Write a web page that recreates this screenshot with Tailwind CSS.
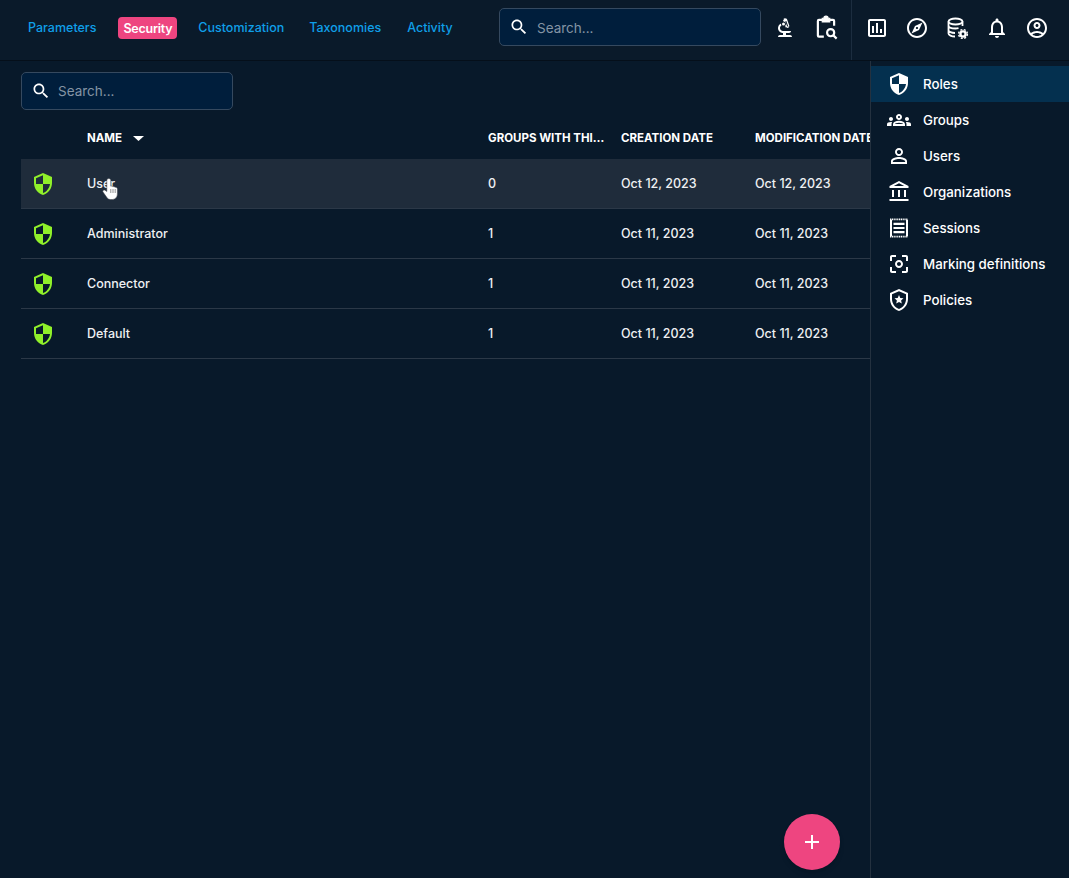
<!DOCTYPE html>
<html><head><meta charset="utf-8"><script src="https://cdn.jsdelivr.net/npm/@tailwindcss/browser@4"></script><title>Security</title></head>
<body class="bg-[#08192a] overflow-hidden">
<div class="relative w-[1069px] h-[878px] flex flex-col overflow-hidden font-['Inter','Roboto',sans-serif] text-white">
 <header class="h-[61px] shrink-0 bg-[#0a1a2a] border-b border-[#050f1a] flex items-center">
  <nav class="flex items-center w-[499px] pl-[21px] gap-[10px] text-[12.5px] font-medium text-[#0f9fe8] pb-[5px]">
   <span class="px-[7px] pt-[4px] pb-[2px] mr-[5px]">Parameters</span>
   <span class="px-[5px] pt-[4px] pb-[2px] h-[22px] leading-[16px] rounded-[4px] bg-[#ee4580] text-white font-semibold tracking-[-0.02em]">Security</span>
   <span class="px-[6px] pt-[4px] pb-[2px] ml-[5px] mr-[3px]">Customization</span>
   <span class="px-[6px] pt-[4px] pb-[2px] mr-[4px]">Taxonomies</span>
   <span class="px-[6px] pt-[4px] pb-[2px]">Activity</span>
  </nav>
  <div class="w-[262px] h-[38px] mb-[6px] bg-[#001e3c] border border-[#35495f] rounded-[5px] flex items-center pl-[9px] gap-[8px] text-[13.5px] text-[#8494a4]">
   <svg class="w-[20px] h-[20px] fill-white shrink-0" viewBox="0 0 24 24"><path d="M15.5 14h-.79l-.28-.27C15.41 12.59 16 11.11 16 9.5 16 5.91 13.09 3 9.5 3S3 5.91 3 9.5 5.91 16 9.5 16c1.61 0 3.09-.59 4.23-1.57l.27.28v.79l5 4.99L20.49 19l-4.99-5zm-6 0C7.01 14 5 11.99 5 9.5S7.01 5 9.5 5 14 7.01 14 9.5 11.99 14 9.5 14z"/></svg>
   <span class="pt-[2px]">Search...</span>
  </div>
  <div class="flex items-center gap-[16px] ml-[12px] pb-[5px]">
   <svg class="w-[24px] h-[24px] fill-white" viewBox="0 0 24 24"><path fill-rule="evenodd" d="M7 19c-1.1 0-2 .9-2 2h14c0-1.1-.9-2-2-2h-4v-2h3c1.1 0 2-.9 2-2h-8c-1.66 0-3-1.34-3-3 0-1.09.59-2.04 1.46-2.56C8.17 9.03 8 8.54 8 8c0-.21.04-.42.09-.62C6.28 8.13 5 9.92 5 12c0 2.76 2.24 5 5 5v2H7zM10.56 5.51C11.91 5.54 13 6.64 13 8c0 .75-.33 1.41-.85 1.87l.59 1.62.94-.34.34.94 1.88-.68-.34-.94.94-.34-2.74-7.52-.94.34-.34-.94-1.88.68.34.94-.94.35.56 1.53zM13.3 4.9l1.9 5.3-1 .4-1.9-5.3z"/><circle cx="10.5" cy="8" r="1.5"/></svg>
   <svg class="w-[26px] h-[26px] fill-none stroke-white stroke-[2]" viewBox="0 0 24 24"><path d="M10 20H5.5a1 1 0 0 1-1-1V5.5a1 1 0 0 1 1-1H9M15 4.500h3.500a1 1 0 0 1 1 1V10"/><path d="M8.500 3h1.500a2 2 0 0 1 4 0h1.500v3.500H8.500z" class="fill-white stroke-[1]"/><circle cx="16.300" cy="16.300" r="3.300"/><path d="M18.800 18.800l3 3"/></svg>
  </div>
  <div class="flex items-center gap-[16px] h-full ml-[12px] pl-[13px] border-l border-[#1c2d3f] pb-[5px]">
   <svg class="w-[24px] h-[24px] fill-white" viewBox="0 0 24 24"><path d="M9 17H7v-7h2v7zm4 0h-2V7h2v10zm4 0h-2v-4h2v4zm2 2H5V5h14v14.100V19zm0-16H5c-1.100 0-2 .9-2 2v14c0 1.100.9 2 2 2h14c1.100 0 2-.9 2-2V5c0-1.100-.9-2-2-2z"/></svg>
   <svg class="w-[24px] h-[24px] fill-white" viewBox="0 0 24 24"><path d="M12 2C6.48 2 2 6.48 2 12s4.48 10 10 10 10-4.48 10-10S17.52 2 12 2zm0 18c-4.41 0-8-3.59-8-8s3.59-8 8-8 8 3.59 8 8-3.59 8-8 8zm-5.500-2.500l7.510-3.490L17.500 6.500 9.990 9.990 6.500 17.500zm5.500-6.600c.61 0 1.100.49 1.100 1.100s-.49 1.100-1.100 1.100-1.100-.49-1.100-1.100.49-1.100 1.100-1.100z"/></svg>
   <svg class="w-[24px] h-[24px] fill-none stroke-white stroke-[1.800]" viewBox="0 0 24 24"><ellipse cx="10.500" cy="5.500" rx="7" ry="3"/><path d="M3.500 5.500v12c0 1.500 3 3 6.500 3M17.500 5.500v4.500M3.500 9.500c0 1.700 3 3 7 3 1 0 2-.1 3-.3M3.500 14c0 1.600 3 3 6.500 3"/><circle cx="18" cy="18" r="2.600" class="stroke-[2.400]"/><circle cx="18" cy="18" r="4.400" class="stroke-[1.400] [stroke-dasharray:2_1.500]"/></svg>
   <svg class="w-[24px] h-[24px] fill-white" viewBox="0 0 24 24"><path d="M12 22c1.100 0 2-.9 2-2h-4c0 1.100.9 2 2 2zm6-6v-5c0-3.070-1.630-5.640-4.500-6.320V4c0-.83-.67-1.500-1.500-1.500s-1.500.67-1.500 1.500v.68C7.640 5.360 6 7.920 6 11v5l-2 2v1h16v-1l-2-2zm-2 1H8v-6c0-2.480 1.510-4.500 4-4.500s4 2.020 4 4.500v6z"/></svg>
   <svg class="w-[24px] h-[24px] fill-white" viewBox="0 0 24 24"><path d="M12 2C6.480 2 2 6.480 2 12s4.480 10 10 10 10-4.480 10-10S17.520 2 12 2zM7.350 18.500C8.660 17.560 10.260 17 12 17s3.340.56 4.650 1.500c-1.310.94-2.910 1.500-4.650 1.500s-3.340-.56-4.650-1.500zm10.790-1.380C16.450 15.800 14.320 15 12 15s-4.450.8-6.140 2.120C4.700 15.730 4 13.950 4 12c0-4.420 3.580-8 8-8s8 3.580 8 8c0 1.950-.7 3.730-1.860 5.120zM12 6c-1.930 0-3.500 1.570-3.500 3.500S10.070 13 12 13s3.500-1.570 3.500-3.500S13.930 6 12 6zm0 5c-.83 0-1.500-.67-1.500-1.500S11.170 8 12 8s1.500.67 1.500 1.500S12.830 11 12 11z"/></svg>
  </div>
 </header>
 <div class="flex flex-1 min-h-0">
  <main class="w-[870px] shrink-0 pl-[21px] pt-[11px] overflow-hidden">
   <div class="w-[212px] h-[38px] bg-[#001e3c] border border-[#35495f] rounded-[5px] flex items-center pl-[9px] gap-[7px] text-[13.500px] text-[#8494a4]">
    <svg class="w-[20px] h-[20px] fill-white shrink-0" viewBox="0 0 24 24"><path d="M15.500 14h-.79l-.28-.27C15.410 12.590 16 11.110 16 9.500 16 5.910 13.090 3 9.500 3S3 5.910 3 9.500 5.910 16 9.500 16c1.610 0 3.090-.59 4.230-1.570l.27.28v.79l5 4.990L20.490 19l-4.990-5zm-6 0C7.010 14 5 11.990 5 9.500S7.010 5 9.500 5 14 7.010 14 9.500 11.990 14 9.500 14z"/></svg>
    <span>Search...</span>
   </div>
   <div class="relative">
    <div class="grid grid-cols-[66px_401px_133px_134px_1fr] items-center h-[49px] pt-[8px] text-[11.500px] font-bold whitespace-nowrap">
     <span></span>
     <span class="flex items-center gap-[11px]">NAME<svg class="w-[11px] h-[5px] fill-white" viewBox="0 0 11 5"><path d="M0 0h11L5.500 5z"/></svg></span>
     <span class="w-[119px] truncate">GROUPS WITH THIS ROLE</span>
     <span>CREATION DATE</span>
     <span class="overflow-hidden">MODIFICATION DATE</span>
    </div>
    <div class="grid grid-cols-[66px_401px_133px_134px_1fr] items-center h-[50px] bg-[#1f2c3b] border-b border-[#2b3847] text-[12.500px] font-medium text-[#eef0f2] [&>span]:pt-[2px]">
     <svg class="w-[24px] h-[24px] ml-[10px] fill-[#90f02a]" viewBox="0 0 24 24"><path d="M12 1 3 5v6c0 5.550 3.840 10.740 9 12 5.160-1.260 9-6.450 9-12V5l-9-4zm0 10.990h7c-.53 4.120-3.280 7.790-7 8.940V12H5V6.300l7-3.110v8.800z"/></svg>
     <span>User</span><span>0</span><span>Oct 12, 2023</span><span>Oct 12, 2023</span>
    </div>
    <div class="grid grid-cols-[66px_401px_133px_134px_1fr] items-center h-[50px] border-b border-[#2b3847] text-[12.500px] font-medium text-[#eef0f2] [&>span]:pt-[2px]">
     <svg class="w-[24px] h-[24px] ml-[10px] fill-[#90f02a]" viewBox="0 0 24 24"><path d="M12 1 3 5v6c0 5.550 3.840 10.740 9 12 5.160-1.260 9-6.450 9-12V5l-9-4zm0 10.990h7c-.53 4.120-3.280 7.790-7 8.940V12H5V6.300l7-3.110v8.800z"/></svg>
     <span>Administrator</span><span>1</span><span>Oct 11, 2023</span><span>Oct 11, 2023</span>
    </div>
    <div class="grid grid-cols-[66px_401px_133px_134px_1fr] items-center h-[50px] border-b border-[#2b3847] text-[12.500px] font-medium text-[#eef0f2] [&>span]:pt-[2px]">
     <svg class="w-[24px] h-[24px] ml-[10px] fill-[#90f02a]" viewBox="0 0 24 24"><path d="M12 1 3 5v6c0 5.550 3.840 10.740 9 12 5.160-1.260 9-6.450 9-12V5l-9-4zm0 10.990h7c-.53 4.120-3.280 7.790-7 8.940V12H5V6.300l7-3.110v8.800z"/></svg>
     <span>Connector</span><span>1</span><span>Oct 11, 2023</span><span>Oct 11, 2023</span>
    </div>
    <div class="grid grid-cols-[66px_401px_133px_134px_1fr] items-center h-[50px] border-b border-[#2b3847] text-[12.500px] font-medium text-[#eef0f2] [&>span]:pt-[2px]">
     <svg class="w-[24px] h-[24px] ml-[10px] fill-[#90f02a]" viewBox="0 0 24 24"><path d="M12 1 3 5v6c0 5.550 3.840 10.740 9 12 5.160-1.260 9-6.450 9-12V5l-9-4zm0 10.990h7c-.53 4.120-3.280 7.790-7 8.940V12H5V6.300l7-3.110v8.800z"/></svg>
     <span>Default</span><span>1</span><span>Oct 11, 2023</span><span>Oct 11, 2023</span>
    </div>
    <svg class="absolute left-[81px] top-[68px] w-[17px] h-[22px]" viewBox="0 0 17 22"><path d="M6.800.6C8 .6 8.800 1.500 8.800 2.600V8.200c.8-.3 1.700 0 2.100.6.7-.4 1.600-.2 2.100.5.9-.3 2.400.3 2.400 1.600V16c0 3-2 5.500-5 5.500H8.500c-1.700 0-2.800-.8-3.600-2L1 14c-.8-1.100.6-2.800 2-1.800l1.800 1.300V2.600C4.800 1.500 5.600.6 6.800.6z" fill="#fff" stroke="#3a3f47" stroke-width=".5"/><path d="M8.800 11v4M11 11v4M13.200 11v4" stroke="#666" stroke-width=".7"/></svg>
   </div>
  </main>
  <aside class="w-[199px] shrink-0 border-l border-[#24313f] pt-[5px] text-[13.300px] font-medium [&>div>span]:pt-[2px]">
   <div class="h-[36px] flex items-center gap-[12px] pl-[16px] bg-[#04304f]"><svg class="w-[24px] h-[24px] fill-white" viewBox="0 0 24 24"><path d="M12 1 3 5v6c0 5.550 3.840 10.740 9 12 5.160-1.260 9-6.450 9-12V5l-9-4zm0 10.990h7c-.53 4.120-3.280 7.790-7 8.940V12H5V6.300l7-3.110v8.800z"/></svg><span>Roles</span></div>
   <div class="h-[36px] flex items-center gap-[12px] pl-[16px]"><svg class="w-[24px] h-[24px] fill-white" viewBox="0 0 24 24"><path d="M4 13c1.100 0 2-.9 2-2s-.9-2-2-2-2 .9-2 2 .9 2 2 2zm1.130 1.100c-.37-.06-.74-.1-1.130-.1-.99 0-1.930.21-2.780.58C.48 14.900 0 15.620 0 16.430V18h4.500v-1.610c0-.83.23-1.610.63-2.290zM20 13c1.100 0 2-.9 2-2s-.9-2-2-2-2 .9-2 2 .9 2 2 2zm4 3.430c0-.81-.48-1.530-1.220-1.850-.85-.37-1.790-.58-2.780-.58-.39 0-.76.04-1.130.1.4.68.63 1.460.63 2.290V18H24v-1.570zm-7.760-2.780C15.070 13.140 13.630 12.750 12 12.750c-1.630 0-3.070.39-4.240.9C6.680 14.130 6 15.210 6 16.390V18h12v-1.610c0-1.180-.68-2.260-1.760-2.740zM8.070 16c.09-.23.13-.39.91-.69.97-.38 1.990-.56 3.020-.56s2.050.18 3.020.56c.77.3.81.46.91.69H8.070zM12 8c.55 0 1 .45 1 1s-.45 1-1 1-1-.45-1-1 .45-1 1-1m0-2c-1.660 0-3 1.340-3 3s1.340 3 3 3 3-1.340 3-3-1.340-3-3-3z"/></svg><span>Groups</span></div>
   <div class="h-[36px] flex items-center gap-[12px] pl-[16px]"><svg class="w-[24px] h-[24px] fill-white" viewBox="0 0 24 24"><path d="M12 5.900c1.160 0 2.100.94 2.100 2.100s-.94 2.100-2.100 2.100S9.900 9.160 9.900 8s.94-2.100 2.100-2.100m0 9c2.970 0 6.100 1.460 6.100 2.100v1.100H5.900V17c0-.64 3.130-2.100 6.100-2.100M12 4C9.790 4 8 5.790 8 8s1.790 4 4 4 4-1.790 4-4-1.790-4-4-4zm0 9c-2.670 0-8 1.340-8 4v3h16v-3c0-2.660-5.330-4-8-4z"/></svg><span>Users</span></div>
   <div class="h-[36px] flex items-center gap-[12px] pl-[16px]"><svg class="w-[24px] h-[24px] fill-white" viewBox="0 0 24 24"><path d="M6.500 10h-2v7h2v-7zm6 0h-2v7h2v-7zm8.500 9H2v2h19v-2zm-2.500-9h-2v7h2v-7zm-7-6.740L16.710 6H6.290l5.210-2.740m0-2.260L2 6v2h19V6l-9.500-5z" transform="translate(.5 0)"/></svg><span>Organizations</span></div>
   <div class="h-[36px] flex items-center gap-[12px] pl-[16px]"><svg class="w-[24px] h-[24px] fill-white" viewBox="0 0 24 24"><path fill-rule="evenodd" d="M3 3.800h2v16.400H3zM19 3.800h2v16.400h-2zM6.500 6.800h11v2.200h-11zM6.500 10.900h11v2.200h-11zM6.500 15h11v2.200h-11z"/><path d="M3 3.400h18M3 20.600h18" class="fill-none stroke-white stroke-[1.800] [stroke-dasharray:1.200_.6]"/></svg><span>Sessions</span></div>
   <div class="h-[36px] flex items-center gap-[12px] pl-[16px]"><svg class="w-[24px] h-[24px] fill-white" viewBox="0 0 24 24"><path d="M12 8c-2.210 0-4 1.790-4 4s1.790 4 4 4 4-1.790 4-4-1.790-4-4-4zm0 6c-1.100 0-2-.9-2-2s.9-2 2-2 2 .9 2 2-.9 2-2 2zm-7 1H3v4c0 1.100.9 2 2 2h4v-2H5v-4zM5 5h4V3H5c-1.100 0-2 .9-2 2v4h2V5zm14-2h-4v2h4v4h2V5c0-1.100-.9-2-2-2zm0 16h-4v2h4c1.100 0 2-.9 2-2v-4h-2v4z"/></svg><span>Marking definitions</span></div>
   <div class="h-[36px] flex items-center gap-[12px] pl-[16px]"><svg class="w-[24px] h-[24px] fill-white" viewBox="0 0 24 24"><path d="M12 1 3 5v6c0 5.550 3.840 10.740 9 12 5.160-1.260 9-6.450 9-12V5l-9-4zm7 10c0 4.520-2.980 8.690-7 9.930-4.020-1.240-7-5.410-7-9.930V6.300l7-3.110 7 3.110V11z"/><path d="M12 7l1.300 3 3.200.3-2.400 2.100.7 3.200L12 14l-2.800 1.600.7-3.200-2.400-2.100 3.200-.3z"/></svg><span>Policies</span></div>
  </aside>
 </div>
 <button class="absolute left-[784px] top-[814px] w-[56px] h-[56px] rounded-full bg-[#ee4580] shadow-md flex items-center justify-center"><svg class="w-[24px] h-[24px] fill-white" viewBox="0 0 24 24"><path d="M19 13h-6v6h-2v-6H5v-2h6V5h2v6h6v2z"/></svg></button>
</div>
</body></html>
